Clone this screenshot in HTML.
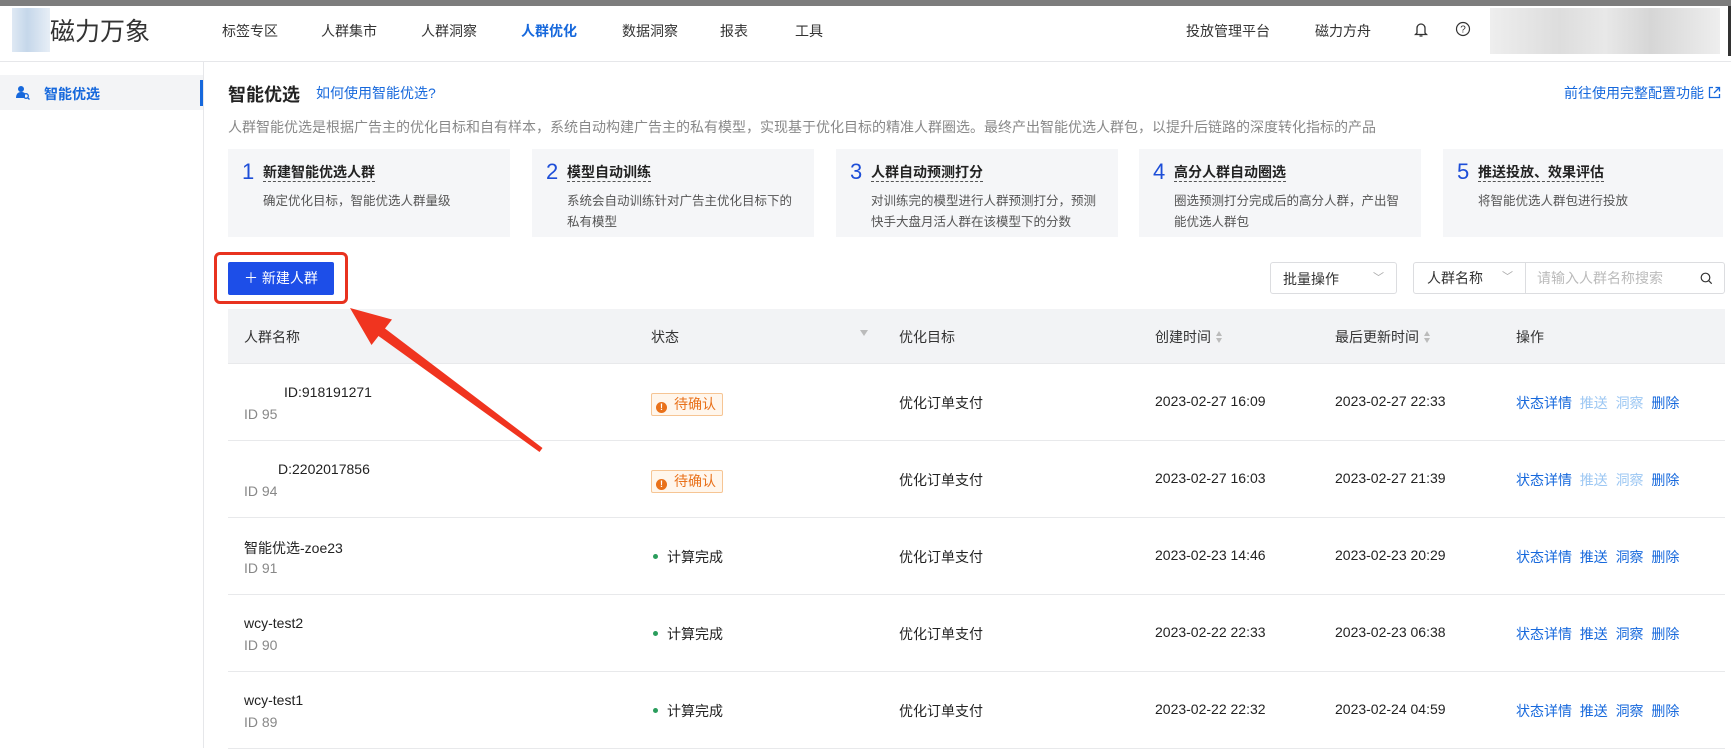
<!DOCTYPE html>
<html><head><meta charset="utf-8"><style>
*{margin:0;padding:0;box-sizing:border-box}
body{width:1731px;height:748px;overflow:hidden;background:#fff;font-family:"Liberation Sans","Noto Sans CJK SC",sans-serif;color:#222;font-size:14px;position:relative}
.a{position:absolute;white-space:nowrap}
.nav{color:#333;font-size:14px;top:21px}
.card{position:absolute;top:149px;width:282px;height:88px;background:#f5f6f8}
.card .n{position:absolute;left:14px;top:10px;font-size:22px;color:#1d4ed8}
.card .t{position:absolute;left:35px;top:14px;font-size:14px;font-weight:bold;color:#222;border-bottom:1px dashed #555;line-height:18px}
.card .d{position:absolute;left:35px;top:42px;font-size:12.5px;color:#555;line-height:21px;width:235px;white-space:normal}
.row{position:absolute;left:228px;width:1497px;height:77px;border-bottom:1px solid #e8e9eb}
.row .a{font-size:14px}
.badge{border:1px solid #f6c594;background:#fff6ec;color:#e9711a;font-size:12.5px;padding:1px 6px 1px 4px;border-radius:2px;height:23px;line-height:19px}
.badge i{display:inline-block;width:11px;height:11px;border-radius:50%;background:#e9711a;color:#fff;font-style:normal;font-size:9px;text-align:center;line-height:11px;margin-right:7px;vertical-align:-1px;font-weight:bold}
.lk{color:#1668dc}
.lt{color:#9cc7f3}
.g{color:#888}
</style></head><body>
<div class="a" style="left:0;top:0;width:1731px;height:6px;background:#7d7d7d"></div>
<div class="a" style="left:0;top:61px;width:1731px;height:1px;background:#e6e7ea"></div>
<div class="a" style="left:12px;top:8px;width:38px;height:44px;background:linear-gradient(90deg,#dfe9f4,#c5d7ea 40%,#e7eef6)"></div>
<div class="a" style="left:50px;top:12px;font-size:25px;color:#333">磁力万象</div>
<div class="a nav" style="left:222px">标签专区</div>
<div class="a nav" style="left:321px">人群集市</div>
<div class="a nav" style="left:421px">人群洞察</div>
<div class="a nav" style="left:521px;color:#1668dc;font-weight:bold">人群优化</div>
<div class="a nav" style="left:622px">数据洞察</div>
<div class="a nav" style="left:720px">报表</div>
<div class="a nav" style="left:795px">工具</div>
<div class="a nav" style="left:1186px">投放管理平台</div>
<div class="a nav" style="left:1315px">磁力方舟</div>
<svg class="a" style="left:1414px;top:21px" width="14" height="17" viewBox="0 0 14 17"><path d="M3 12V7a4 4 0 0 1 8 0v5l1.5 1.5h-11z M5.5 15h3" fill="none" stroke="#333" stroke-width="1.3"/></svg>
<svg class="a" style="left:1455px;top:21px" width="16" height="16" viewBox="0 0 16 16"><circle cx="8" cy="8" r="6.5" fill="none" stroke="#333" stroke-width="1.2"/><text x="8" y="11.5" font-size="10" text-anchor="middle" fill="#333" font-family="Liberation Sans">?</text></svg>
<div class="a" style="left:1490px;top:8px;width:230px;height:46px;background:linear-gradient(90deg,#eee,#ddd 30%,#e8e8e8 50%,#d6d6d6 70%,#eee)"></div>
<div class="a" style="left:1728px;top:6px;width:3px;height:50px;background:#333"></div>
<!-- sidebar -->
<div class="a" style="left:203px;top:62px;width:1px;height:686px;background:#e6e7ea"></div>
<div class="a" style="left:0;top:75px;width:203px;height:35px;background:#f3f4f6"></div>
<div class="a" style="left:200px;top:80px;width:3px;height:26px;background:#1668dc"></div>
<svg class="a" style="left:16px;top:85px" width="14" height="15" viewBox="0 0 14 15"><circle cx="5" cy="4" r="3" fill="#1668dc"/><path d="M0 13c0-4 2-6 5-6s4 1 4 2v4z" fill="#1668dc"/><circle cx="10" cy="11" r="2.3" fill="none" stroke="#1668dc" stroke-width="1.3"/><path d="M11.5 12.5l2 2" stroke="#1668dc" stroke-width="1.3"/></svg>
<div class="a" style="left:44px;top:84px;font-size:14px;color:#1668dc;font-weight:bold">智能优选</div>
<!-- content -->
<div class="a" style="left:228px;top:81px;font-size:18px;font-weight:bold;color:#222">智能优选</div>
<div class="a lk" style="left:316px;top:83px;font-size:14px">如何使用智能优选?</div>
<div class="a lk" style="left:1564px;top:83px;font-size:14px">前往使用完整配置功能 <svg width="13" height="13" viewBox="0 0 13 13" style="vertical-align:-1px"><path d="M5 1.5H1.5v10h10V8 M7.5 1.5h4v4 M11.5 1.5L6 7" fill="none" stroke="#1668dc" stroke-width="1.3"/></svg></div>
<div class="a" style="left:228px;top:117px;font-size:14px;color:#888">人群智能优选是根据广告主的优化目标和自有样本，系统自动构建广告主的私有模型，实现基于优化目标的精准人群圈选。最终产出智能优选人群包，以提升后链路的深度转化指标的产品</div>
<div class="card" style="left:228px"><span class="n">1</span><span class="t">新建智能优选人群</span><div class="d">确定优化目标，智能优选人群量级</div></div>
<div class="card" style="left:532px"><span class="n">2</span><span class="t">模型自动训练</span><div class="d">系统会自动训练针对广告主优化目标下的私有模型</div></div>
<div class="card" style="left:836px"><span class="n">3</span><span class="t">人群自动预测打分</span><div class="d">对训练完的模型进行人群预测打分，预测快手大盘月活人群在该模型下的分数</div></div>
<div class="card" style="left:1139px"><span class="n">4</span><span class="t">高分人群自动圈选</span><div class="d">圈选预测打分完成后的高分人群，产出智能优选人群包</div></div>
<div class="card" style="left:1443px;width:280px"><span class="n">5</span><span class="t">推送投放、效果评估</span><div class="d">将智能优选人群包进行投放</div></div>
<!-- button -->
<div class="a" style="left:228px;top:262px;width:106px;height:33px;background:#1d4ee8;border-radius:2px;color:#fff;font-size:14px;line-height:33px;text-align:center">＋ 新建人群</div>
<div class="a" style="left:214px;top:252px;width:134px;height:52px;border:3px solid #e8321f;border-radius:6px"></div>
<!-- filters -->
<div class="a" style="left:1270px;top:262px;width:127px;height:32px;border:1px solid #dcdde0;border-radius:3px;padding:6px 12px;color:#333">批量操作<span style="position:absolute;right:12px;top:6px;color:#aaa;font-size:11px">﹀</span></div>
<div class="a" style="left:1413px;top:262px;width:312px;height:32px;border:1px solid #dcdde0;border-radius:3px"></div>
<div class="a" style="left:1427px;top:268px;color:#333">人群名称</div>
<div class="a" style="left:1502px;top:268px;color:#aaa;font-size:11px">﹀</div>
<div class="a" style="left:1525px;top:263px;width:1px;height:30px;background:#dcdde0"></div>
<div class="a" style="left:1537px;top:268px;color:#bbb">请输入人群名称搜索</div>
<svg class="a" style="left:1700px;top:272px" width="13" height="13" viewBox="0 0 13 13"><circle cx="5.5" cy="5.5" r="4.3" fill="none" stroke="#333" stroke-width="1.2"/><path d="M8.7 8.7l3 3" stroke="#333" stroke-width="1.2"/></svg>
<!-- table header -->
<div class="a" style="left:228px;top:309px;width:1497px;height:55px;background:#f2f3f5;border-bottom:1px solid #e8e9eb"></div>
<div class="a" style="left:244px;top:327px;color:#333">人群名称</div>
<div class="a" style="left:651px;top:327px;color:#333">状态</div>
<div class="a" style="left:860px;top:330px;width:0;height:0;border-left:4px solid transparent;border-right:4px solid transparent;border-top:6px solid #bbb"></div>
<div class="a" style="left:899px;top:327px;color:#333">优化目标</div>
<div class="a" style="left:1155px;top:327px;color:#333">创建时间 <svg width="8" height="14" viewBox="0 0 8 14" style="vertical-align:-2px"><path d="M4 1L7 6H1z M4 13L7 8H1z" fill="#bbb"/></svg></div>
<div class="a" style="left:1335px;top:327px;color:#333">最后更新时间 <svg width="8" height="14" viewBox="0 0 8 14" style="vertical-align:-2px"><path d="M4 1L7 6H1z M4 13L7 8H1z" fill="#bbb"/></svg></div>
<div class="a" style="left:1516px;top:327px;color:#333">操作</div>
<!-- rows -->
<div class="row" style="top:364px">
<div class="a" style="left:56px;top:20px">ID:918191271</div><div class="a g" style="left:16px;top:42px">ID 95</div>
<div class="a badge" style="left:423px;top:29px"><i>!</i>待确认</div>
<div class="a" style="left:671px;top:29px">优化订单支付</div><div class="a" style="left:927px;top:29px">2023-02-27 16:09</div><div class="a" style="left:1107px;top:29px">2023-02-27 22:33</div>
<div class="a" style="left:1288px;top:29px"><span class="lk">状态详情</span>&nbsp; <span class="lt">推送</span>&nbsp; <span class="lt">洞察</span>&nbsp; <span class="lk">删除</span></div></div>
<div class="row" style="top:441px">
<div class="a" style="left:50px;top:20px">D:2202017856</div><div class="a g" style="left:16px;top:42px">ID 94</div>
<div class="a badge" style="left:423px;top:29px"><i>!</i>待确认</div>
<div class="a" style="left:671px;top:29px">优化订单支付</div><div class="a" style="left:927px;top:29px">2023-02-27 16:03</div><div class="a" style="left:1107px;top:29px">2023-02-27 21:39</div>
<div class="a" style="left:1288px;top:29px"><span class="lk">状态详情</span>&nbsp; <span class="lt">推送</span>&nbsp; <span class="lt">洞察</span>&nbsp; <span class="lk">删除</span></div></div>
<div class="row" style="top:518px">
<div class="a" style="left:16px;top:20px">智能优选-zoe23</div><div class="a g" style="left:16px;top:42px">ID 91</div>
<div class="a" style="left:425px;top:29px"><span style="display:inline-block;width:5px;height:5px;border-radius:50%;background:#2a9d5c;vertical-align:3px;margin-right:9px"></span>计算完成</div>
<div class="a" style="left:671px;top:29px">优化订单支付</div><div class="a" style="left:927px;top:29px">2023-02-23 14:46</div><div class="a" style="left:1107px;top:29px">2023-02-23 20:29</div>
<div class="a" style="left:1288px;top:29px"><span class="lk">状态详情</span>&nbsp; <span class="lk">推送</span>&nbsp; <span class="lk">洞察</span>&nbsp; <span class="lk">删除</span></div></div>
<div class="row" style="top:595px">
<div class="a" style="left:16px;top:20px">wcy-test2</div><div class="a g" style="left:16px;top:42px">ID 90</div>
<div class="a" style="left:425px;top:29px"><span style="display:inline-block;width:5px;height:5px;border-radius:50%;background:#2a9d5c;vertical-align:3px;margin-right:9px"></span>计算完成</div>
<div class="a" style="left:671px;top:29px">优化订单支付</div><div class="a" style="left:927px;top:29px">2023-02-22 22:33</div><div class="a" style="left:1107px;top:29px">2023-02-23 06:38</div>
<div class="a" style="left:1288px;top:29px"><span class="lk">状态详情</span>&nbsp; <span class="lk">推送</span>&nbsp; <span class="lk">洞察</span>&nbsp; <span class="lk">删除</span></div></div>
<div class="row" style="top:672px">
<div class="a" style="left:16px;top:20px">wcy-test1</div><div class="a g" style="left:16px;top:42px">ID 89</div>
<div class="a" style="left:425px;top:29px"><span style="display:inline-block;width:5px;height:5px;border-radius:50%;background:#2a9d5c;vertical-align:3px;margin-right:9px"></span>计算完成</div>
<div class="a" style="left:671px;top:29px">优化订单支付</div><div class="a" style="left:927px;top:29px">2023-02-22 22:32</div><div class="a" style="left:1107px;top:29px">2023-02-24 04:59</div>
<div class="a" style="left:1288px;top:29px"><span class="lk">状态详情</span>&nbsp; <span class="lk">推送</span>&nbsp; <span class="lk">洞察</span>&nbsp; <span class="lk">删除</span></div></div>
<svg class="a" style="left:0;top:0" width="1731" height="748"><polygon points="542.5,448 385,328.5 392,319.5 350,308 371.5,345 378.5,336 539.5,452" fill="#f0341f"/></svg>
</body></html>
